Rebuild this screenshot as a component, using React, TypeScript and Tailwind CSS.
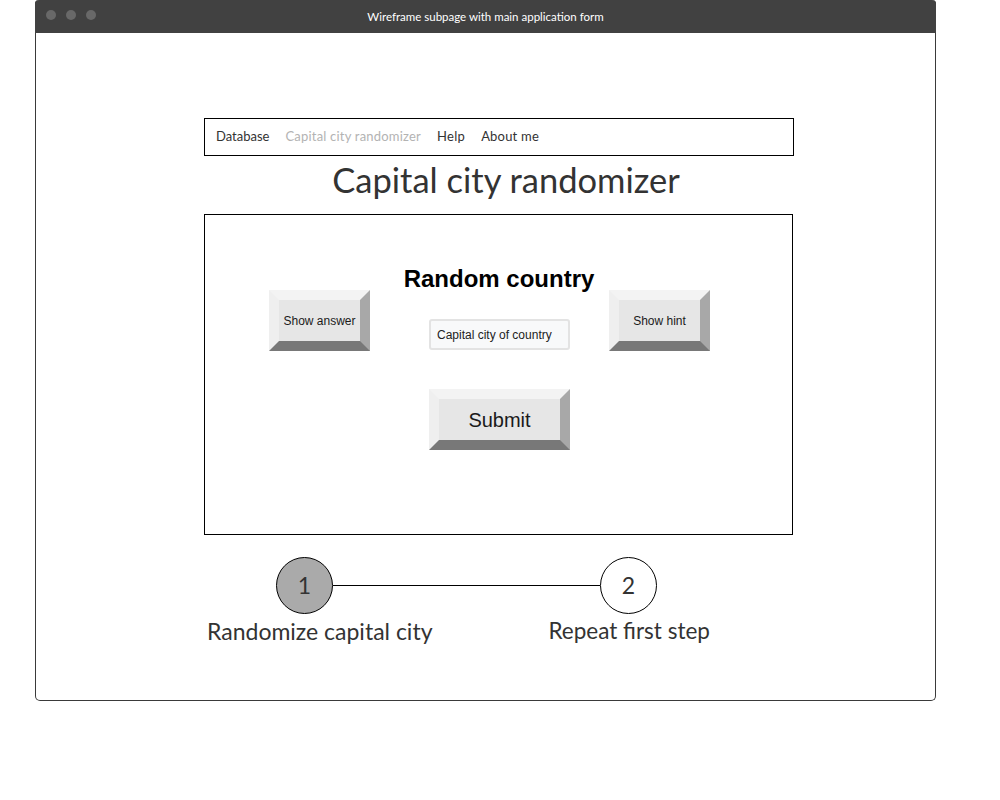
const sans = "font-['Lato','Noto_Sans',sans-serif]";
const arial = "font-['Liberation_Sans',Arial,sans-serif]";

function BevelButton({ label, w, textSize }: { label: string; w: string; textSize: string }) {
    return (
        <div
            className={`${w} h-[61px] box-border border-[10px] border-t-[#f3f3f3] border-l-[#efefef] border-r-[#a8a8a8] border-b-[#787878] bg-[#e6e6e6] flex items-center justify-center ${arial} ${textSize} text-[#1a1a1a]`}
        >
            {label}
        </div>
    );
}

export default function App() {
    return (
        <div className="w-[1000px] h-[800px] bg-white pl-[35px]">
            <div className="w-[901px] h-[701px] border border-[#3a3a3a] border-t-0 rounded-b-[5px] rounded-t-[4px] flex flex-col">
                {/* title bar */}
                <div className="relative h-[33px] bg-[#414141] rounded-t-[4px] -mx-px flex items-center justify-center">
                    <div className="absolute left-[11px] top-[10px] flex gap-[10px]">
                        <span className="w-[10px] h-[10px] rounded-full bg-[#686868]" />
                        <span className="w-[10px] h-[10px] rounded-full bg-[#686868]" />
                        <span className="w-[10px] h-[10px] rounded-full bg-[#686868]" />
                    </div>
                    <span className={`${sans} text-[11.5px] text-white`}>Wireframe subpage with main application form</span>
                </div>

                <div className="flex flex-col pl-[168px]">
                    {/* nav */}
                    <div className={`mt-[85px] w-[590px] h-[38px] border border-black flex items-center gap-[16px] px-[11px] ${sans} text-[13px] text-[#333]`}>
                        <span>Database</span>
                        <span className="text-[#b3b3b3] tracking-[0.2px]">Capital city randomizer</span>
                        <span className="tracking-[0.3px]">Help</span>
                        <span className="tracking-[0.2px]">About me</span>
                    </div>

                    <h1 className={`w-[590px] pl-[14px] text-center ${sans} text-[34.5px] leading-[50px] -mt-[1px] text-[#333]`}>Capital city randomizer</h1>

                    {/* form */}
                    <div className="mt-[9px] w-[589px] h-[321px] border border-black flex flex-col">
                        <div className={`mt-[50px] text-center ${arial} font-bold text-[24px] leading-[28px] text-black pl-[1px]`}>Random country</div>
                        <div className="flex -mt-[3px]">
                            <div className="ml-[64px]">
                                <BevelButton label="Show answer" w="w-[101px]" textSize="text-[12px]" />
                            </div>
                            <div className="ml-[59px] mt-[29px] w-[141px] h-[31px] border-2 border-[#e3e3e3] rounded-[3px] bg-[#f8f9fa] flex items-center pl-[6px]">
                                <span className={`${arial} text-[12px] text-[#222]`}>Capital city of country</span>
                            </div>
                            <div className="ml-[39px]">
                                <BevelButton label="Show hint" w="w-[101px]" textSize="text-[12px]" />
                            </div>
                        </div>
                        <div className="mt-[38px] ml-[224px]">
                            <BevelButton label="Submit" w="w-[141px]" textSize="text-[20px]" />
                        </div>
                    </div>

                    {/* steps */}
                    <div className="mt-[22px] flex items-center ml-[72px]">
                        <div className={`w-[57px] h-[57px] rounded-full border border-black bg-[#aaaaaa] flex items-center justify-center ${sans} text-[23px] text-[#333]`}>1</div>
                        <div className="w-[267px] h-px bg-black" />
                        <div className={`w-[57px] h-[57px] rounded-full border border-black bg-white flex items-center justify-center ${sans} text-[23px] text-[#333]`}>2</div>
                    </div>
                    <div className={`flex items-center ${sans} text-[23px] leading-[30px] text-[#333] mt-[2px]`}>
                        <span className="ml-[3px]">Randomize capital city</span>
                        <span className="ml-[116px] text-[22.5px]">Repeat first step</span>
                    </div>
                </div>
            </div>
        </div>
    );
}
